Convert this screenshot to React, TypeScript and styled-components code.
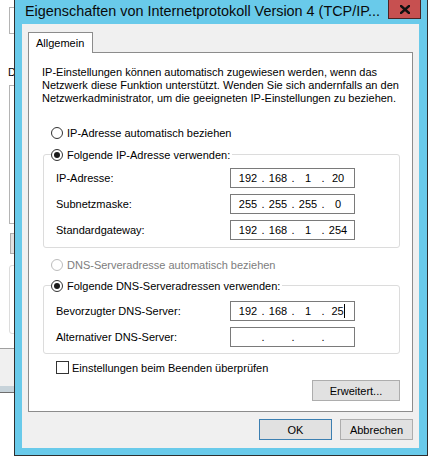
import React from "react";
import styled, { createGlobalStyle } from "styled-components";

const GlobalStyle = createGlobalStyle`
  html, body { margin: 0; padding: 0; background: #ffffff; }
  body {
    width: 440px;
    height: 469px;
    overflow: hidden;
    font-family: "Liberation Sans", Arial, sans-serif;
    font-size: 11px;
    color: #000;
  }
  * { box-sizing: border-box; }
`;

const Stage = styled.div`
  position: relative;
  width: 440px;
  height: 469px;
  overflow: hidden;
  background: #fff;
`;

/* ---------- window behind the dialog ---------- */
const BackWindow = styled.div`
  position: absolute;
  left: 0;
  top: 0;
  width: 80px;
  height: 393px;
  display: flex;
  flex-direction: column;
  background: #fff;
`;

const BackBox = styled.div<{ $mt: number; $h: number; $light?: boolean }>`
  margin: ${(p) => p.$mt}px 0 0 9px;
  height: ${(p) => p.$h}px;
  border: 1px solid ${(p) => (p.$light ? "#dcdcdc" : "#b4b4b4")};
  border-radius: ${(p) => (p.$light ? "3px" : "0")};
  flex-shrink: 0;
`;

const BackLabel = styled.div`
  margin: 32px 0 0 8px;
  height: 13px;
  line-height: 13px;
  font-size: 11px;
`;

const BackThumb = styled.div`
  margin: 9px 0 0 10px;
  width: 20px;
  height: 21px;
  background: #e1e1e1;
  border: 1px solid #adadad;
  flex-shrink: 0;
`;

const BackFooter = styled.div`
  margin-top: 14px;
  height: 45px;
  border-top: 1px solid #a0a0a0;
  border-bottom: 1px solid #6e6e6e;
  background: #f0f0f0;
  display: flex;
  flex-direction: column;
  justify-content: flex-end;
`;

const BackBand = styled.div`
  height: 6px;
  background: #c7d3da;
`;

/* ---------- dialog ---------- */
const Dialog = styled.div`
  position: absolute;
  left: 14px;
  top: 0;
  width: 414px;
  height: 456px;
  border: 1px solid #2e2e2e;
  border-top: none;
  background: #69caea;
  display: flex;
  flex-direction: column;
`;

const TitleBar = styled.div`
  height: 24px;
  display: flex;
  align-items: flex-start;
  padding-left: 10px;
  flex-shrink: 0;
`;

const Title = styled.div`
  flex: 1;
  font-family: "Liberation Sans", Arial, sans-serif;
  font-size: 14.4px;
  line-height: 20px;
  margin-top: 1px;
  color: #0a0a0a;
  white-space: nowrap;
`;

const CloseButton = styled.div`
  width: 33px;
  height: 19px;
  margin-right: 6px;
  background: #c75050;
  border: 1px solid #4a2424;
  border-top: none;
  display: flex;
  align-items: center;
  justify-content: center;
  flex-shrink: 0;
`;

const Frame = styled.div`
  flex: 1;
  padding: 0 8px 7px 7px;
  display: flex;
`;

const Client = styled.div`
  flex: 1;
  background: #f0f0f0;
  padding: 8px 6px 8px 6px;
  display: flex;
  flex-direction: column;
`;

const TabStrip = styled.div`
  display: flex;
`;

const Tab = styled.div`
  position: relative;
  z-index: 1;
  height: 21px;
  margin-bottom: -1px;
  padding: 0 8px 0 7px;
  border: 1px solid #8c8c8c;
  border-bottom: none;
  background: #fff;
  line-height: 20px;
  font-size: 11px;
`;

const Panel = styled.div`
  height: 360px;
  border: 1px solid #8c8c8c;
  background: #fff;
  padding: 13px 12px 10px 13px;
  display: flex;
  flex-direction: column;
`;

const Paragraph = styled.div`
  line-height: 13px;
  height: 39px;
  white-space: nowrap;
`;

const RadioRow = styled.label<{ $mt: number; $disabled?: boolean }>`
  display: flex;
  align-items: center;
  gap: 4px;
  height: 15px;
  margin: ${(p) => p.$mt}px 0 0 9px;
  color: ${(p) => (p.$disabled ? "#7d7d7d" : "#000")};
`;

const RadioCircle = styled.span<{ $checked?: boolean; $disabled?: boolean }>`
  width: 12px;
  height: 12px;
  border-radius: 50%;
  border: 1px solid ${(p) => (p.$disabled ? "#bcbcbc" : "#333")};
  background: #fff;
  display: inline-flex;
  align-items: center;
  justify-content: center;
  flex-shrink: 0;
  &::after {
    content: "";
    width: 6px;
    height: 6px;
    border-radius: 50%;
    background: #1b1b1b;
    display: ${(p) => (p.$checked ? "block" : "none")};
  }
`;

const Group = styled.fieldset<{ $mt: number; $pt: number; $pb: number }>`
  margin: ${(p) => p.$mt}px 0 0 1px;
  padding: ${(p) => p.$pt}px 0 ${(p) => p.$pb}px 7px;
  border: 1px solid #dcdcdc;
  border-radius: 3px;
  min-width: 0;
`;

const Legend = styled.legend`
  padding: 0 2px 0 0;
  height: 15px;
  display: flex;
  align-items: center;
  gap: 4px;
`;

const FieldGrid = styled.div`
  display: grid;
  grid-template-columns: 174px 125px;
  row-gap: 6px;
  padding-left: 5px;
  align-items: center;
`;

const FieldLabel = styled.span`
  line-height: 13px;
`;

const IpBox = styled.div`
  width: 125px;
  height: 20px;
  border: 1px solid #7a7a7a;
  background: #fff;
  display: flex;
  align-items: center;
  padding-left: 5px;
`;

const Segment = styled.span`
  width: 24px;
  display: inline-flex;
  justify-content: center;
  align-items: center;
  line-height: 13px;
`;

const Dot = styled.span`
  width: 6px;
  text-align: center;
  line-height: 13px;
`;

const Caret = styled.span`
  width: 1px;
  height: 14px;
  background: #000;
`;

const CheckRow = styled.label`
  display: flex;
  align-items: center;
  gap: 3px;
  height: 15px;
  margin: 6px 0 0 14px;
`;

const CheckBox = styled.span`
  width: 13px;
  height: 13px;
  border: 1px solid #333;
  background: #fff;
  flex-shrink: 0;
`;

const Button = styled.div<{ $w: number; $focused?: boolean }>`
  width: ${(p) => p.$w}px;
  height: 21px;
  background: #e1e1e1;
  border: 1px solid ${(p) => (p.$focused ? "#3c7fb1" : "#adadad")};
  display: flex;
  align-items: center;
  justify-content: center;
  font-size: 11px;
  flex-shrink: 0;
`;

const AdvancedRow = styled.div`
  display: flex;
  justify-content: flex-end;
  margin-top: 5px;
`;

const ButtonRow = styled.div`
  display: flex;
  justify-content: flex-end;
  gap: 8px;
  margin-top: 7px;
`;

type IpProps = { parts: string[]; caret?: boolean };

const IpField: React.FC<IpProps> = ({ parts, caret }) => (
  <IpBox>
    {parts.map((p, i) => (
      <React.Fragment key={i}>
        <Segment>
          {p}
          {caret && i === 3 ? <Caret /> : null}
        </Segment>
        {i < 3 ? <Dot>.</Dot> : null}
      </React.Fragment>
    ))}
  </IpBox>
);

export default function App() {
  return (
    <Stage>
      <GlobalStyle />
      <BackWindow>
        <BackBox $mt={7} $h={27} />
        <BackLabel>D</BackLabel>
        <BackBox $mt={6} $h={139} />
        <BackThumb />
        <BackBox $mt={11} $h={69} $light />
        <BackFooter>
          <BackBand />
        </BackFooter>
      </BackWindow>

      <Dialog>
        <TitleBar>
          <Title>Eigenschaften von Internetprotokoll Version 4 (TCP/IP...</Title>
          <CloseButton>
            <svg width="10" height="9" viewBox="0 0 10 9">
              <path d="M1 1 L9 8 M9 1 L1 8" stroke="#111" strokeWidth="2.4" strokeLinecap="square" />
            </svg>
          </CloseButton>
        </TitleBar>
        <Frame>
          <Client>
            <TabStrip>
              <Tab>Allgemein</Tab>
            </TabStrip>
            <Panel>
              <Paragraph>
                IP-Einstellungen können automatisch zugewiesen werden, wenn das
                <br />
                Netzwerk diese Funktion unterstützt. Wenden Sie sich andernfalls an den
                <br />
                Netzwerkadministrator, um die geeigneten IP-Einstellungen zu beziehen.
              </Paragraph>

              <RadioRow $mt={20}>
                <RadioCircle />
                IP-Adresse automatisch beziehen
              </RadioRow>

              <Group $mt={7} $pt={6} $pb={7}>
                <Legend>
                  <RadioCircle $checked />
                  Folgende IP-Adresse verwenden:
                </Legend>
                <FieldGrid>
                  <FieldLabel>IP-Adresse:</FieldLabel>
                  <IpField parts={["192", "168", "1", "20"]} />
                  <FieldLabel>Subnetzmaske:</FieldLabel>
                  <IpField parts={["255", "255", "255", "0"]} />
                  <FieldLabel>Standardgateway:</FieldLabel>
                  <IpField parts={["192", "168", "1", "254"]} />
                </FieldGrid>
              </Group>

              <RadioRow $mt={9} $disabled>
                <RadioCircle $disabled />
                DNS-Serveradresse automatisch beziehen
              </RadioRow>

              <Group $mt={6} $pt={8} $pb={6}>
                <Legend>
                  <RadioCircle $checked />
                  Folgende DNS-Serveradressen verwenden:
                </Legend>
                <FieldGrid>
                  <FieldLabel>Bevorzugter DNS-Server:</FieldLabel>
                  <IpField parts={["192", "168", "1", "25"]} caret />
                  <FieldLabel>Alternativer DNS-Server:</FieldLabel>
                  <IpField parts={["", "", "", ""]} />
                </FieldGrid>
              </Group>

              <CheckRow>
                <CheckBox />
                Einstellungen beim Beenden überprüfen
              </CheckRow>

              <AdvancedRow>
                <Button $w={88}>Erweitert...</Button>
              </AdvancedRow>
            </Panel>
            <ButtonRow>
              <Button $w={73} $focused>
                OK
              </Button>
              <Button $w={73}>Abbrechen</Button>
            </ButtonRow>
          </Client>
        </Frame>
      </Dialog>
    </Stage>
  );
}
